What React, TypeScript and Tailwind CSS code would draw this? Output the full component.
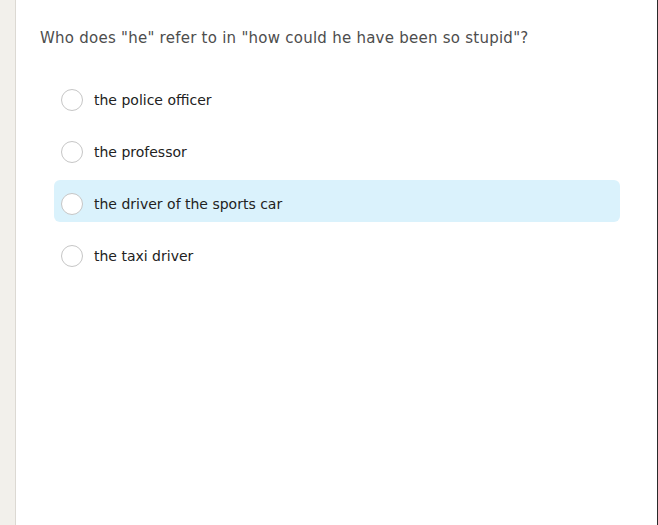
const options = [
  { label: 'the police officer', active: false },
  { label: 'the professor', active: false },
  { label: 'the driver of the sports car', active: true },
  { label: 'the taxi driver', active: false },
];

export default function App() {
  return (
    <div className="flex h-[525px] w-[658px] bg-white" style={{ fontFamily: '"DejaVu Sans", Verdana, sans-serif' }}>
      {/* textured side strip */}
      <div className="w-[16px] shrink-0 border-r border-[#dcd9d3] bg-[#f2f0eb]" />
      <div className="flex-1 pl-[24px] pr-[37px] pt-[28px]">
        <p className="text-[15px] leading-[20px] tracking-[0.25px] text-[#4d4d4d]">
          Who does "he" refer to in "how could he have been so stupid"?
        </p>
        <div className="mt-[28px] flex flex-col gap-[10px] pl-[14px]">
          {options.map((o) => (
            <div
              key={o.label}
              className={`flex h-[42px] items-center gap-[11px] rounded-[6px] pl-[7px] pt-[6px] ${
                o.active ? 'bg-[#daf2fc]' : ''
              }`}
            >
              <span className="h-[22px] w-[22px] rounded-full border border-[#c6c6c6] bg-white" />
              <span className="text-[14px] text-[#222]">{o.label}</span>
            </div>
          ))}
        </div>
      </div>
      <div className="w-px shrink-0 bg-[#2a2a2a]" />
    </div>
  );
}
